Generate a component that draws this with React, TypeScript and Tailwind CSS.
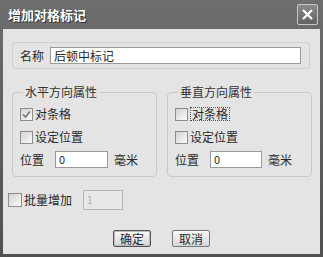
import type { ReactNode } from 'react'

const font = { fontFamily: '"Noto Sans CJK SC", "DejaVu Sans", sans-serif' }

function Check({ checked, focus, label }: { checked?: boolean; focus?: boolean; label: string }) {
  return (
    <div className="flex h-[14px] items-center gap-[2px]">
      <span className="flex h-[13px] w-[13px] items-center justify-center border border-[#8d8d8d] bg-gradient-to-br from-[#d2d2d2] to-[#fbfbfb]">
        {checked && (
          <svg width="9" height="9" viewBox="0 0 9 9">
            <path d="M1 4.5 L3.5 7 L8 1.5" fill="none" stroke="#777" strokeWidth="1.6" />
          </svg>
        )}
      </span>
      <span className={focus ? 'border border-dotted border-[#555] px-[1px] leading-[12px]' : 'leading-[12px]'}>
        {label}
      </span>
    </div>
  )
}

function Group({ title, children }: { title: string; children: ReactNode }) {
  return (
    <fieldset className="w-[145px] rounded-[4px] border border-[#c9c9c9] px-[7px] pb-[8px]">
      <legend className="ml-[3px] px-[2px] text-[12px] leading-[16px] text-[#333]">{title}</legend>
      {children}
    </fieldset>
  )
}

function PosRow({ inputW }: { inputW: string }) {
  return (
    <div className="mt-[7px] flex h-[17px] items-center">
      <span className="w-[35px]">位置</span>
      <div className={`${inputW} h-[17px] border border-[#9a9a9a] bg-white pl-[3px] text-[11px] leading-[15px]`}>0</div>
      <span className="ml-[6px]">毫米</span>
    </div>
  )
}

export default function App() {
  return (
    <div
      className="flex h-[257px] w-[323px] flex-col bg-gradient-to-b from-[#6e6e6e] to-[#505050] px-[3px] pb-[3px] text-[12px] text-[#2a2a2a]"
      style={font}
    >
      <div className="flex h-[29px] items-center justify-between pl-[5px] pr-[2px]">
        <span className="text-[13px] font-bold text-white [text-shadow:1px_1px_0_#333]">增加对格标记</span>
        <span className="flex h-[21px] w-[21px] items-center justify-center rounded-[2px] border border-[#c8c8c8] bg-gradient-to-b from-[#8a8a8a] to-[#626262]">
          <svg width="13" height="13" viewBox="0 0 13 13">
            <path d="M2 2 L11 11 M11 2 L2 11" stroke="white" strokeWidth="2.2" />
          </svg>
        </span>
      </div>

      <div className="flex flex-1 flex-col bg-[#e4e4e4] pl-[9px] pr-[8px] pt-[13px]">
        <div className="flex h-[27px] w-[298px] items-center rounded-[4px] border border-[#cfcfcf] pl-[7px]">
          <span className="w-[30px]">名称</span>
          <div className="h-[17px] w-[251px] border border-[#9a9a9a] bg-white pl-[3px] leading-[15px]">后顿中标记</div>
        </div>

        <div className="mt-[15px] flex gap-[10px]">
          <Group title="水平方向属性">
            <div className="mt-[7px]">
              <Check checked label="对条格" />
            </div>
            <div className="mt-[9px]">
              <Check label="设定位置" />
            </div>
            <PosRow inputW="w-[53px]" />
          </Group>
          <Group title="垂直方向属性">
            <div className="mt-[7px]">
              <Check focus label="对条格" />
            </div>
            <div className="mt-[9px]">
              <Check label="设定位置" />
            </div>
            <PosRow inputW="w-[52px]" />
          </Group>
        </div>

        <div className="-ml-[4px] mt-[13px] flex h-[20px] items-center">
          <span className="flex h-[14px] w-[14px] border border-[#8d8d8d] bg-gradient-to-br from-[#d2d2d2] to-[#fbfbfb]" />
          <span className="ml-[2px] text-[12px]">批量增加</span>
          <div className="ml-[11px] h-[20px] w-[40px] border border-[#b5b5b5] bg-[#e8e8e8] pl-[3px] text-[10px] leading-[18px] text-[#aaa]">1</div>
        </div>

        <div className="mt-[20px] flex justify-center gap-[21px] pr-[1px]">
          <button className="h-[17px] w-[38px] rounded-[2px] border border-[#555] bg-gradient-to-b from-[#fafafa] to-[#d6d6d6] text-[12px] leading-[15px] shadow-[inset_0_0_0_1px_#bbb]">
            确定
          </button>
          <button className="h-[17px] w-[38px] rounded-[2px] border border-[#777] bg-gradient-to-b from-[#fafafa] to-[#d6d6d6] text-[12px] leading-[15px]">
            取消
          </button>
        </div>
      </div>
    </div>
  )
}
